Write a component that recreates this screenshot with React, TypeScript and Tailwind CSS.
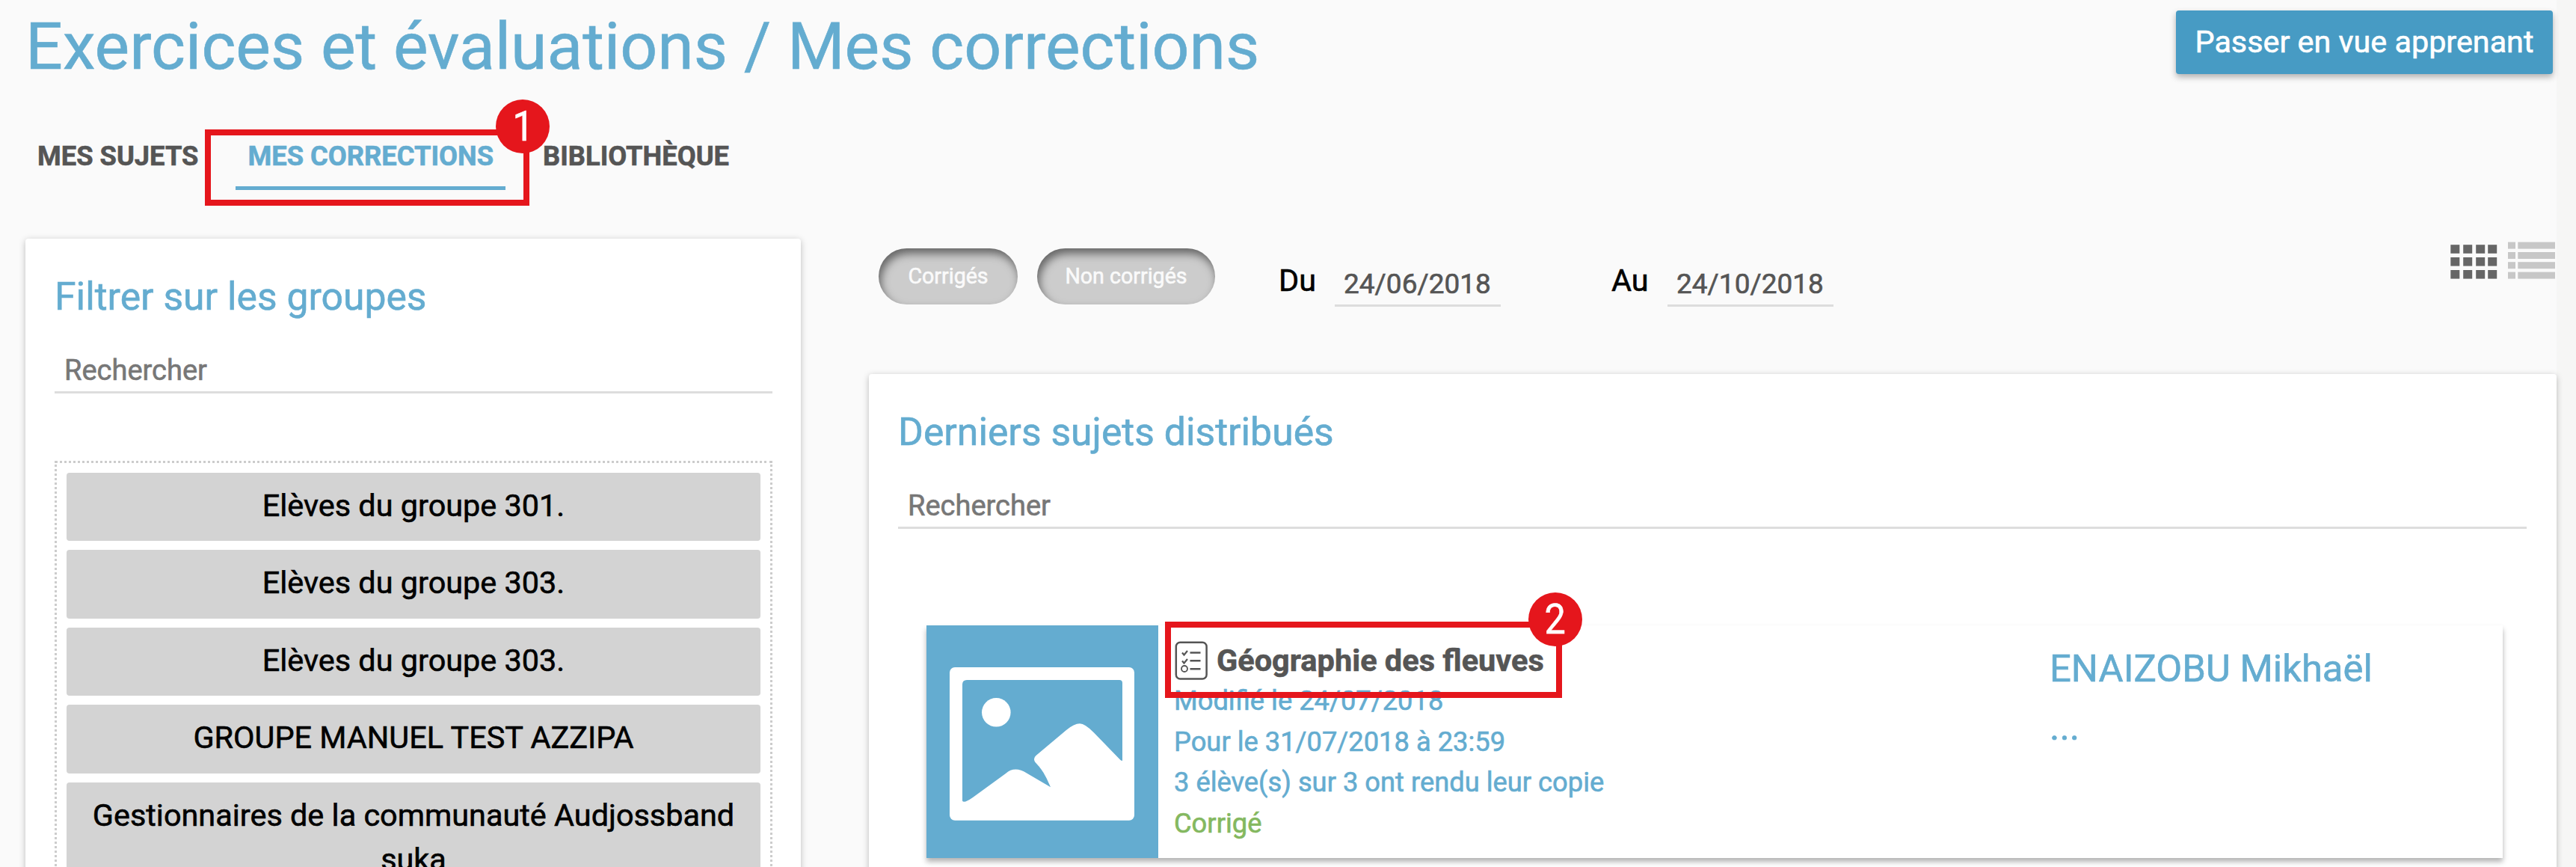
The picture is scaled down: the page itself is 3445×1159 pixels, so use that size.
import type { ReactNode } from "react";

const groups = [
  "Elèves du groupe 301.",
  "Elèves du groupe 303.",
  "Elèves du groupe 303.",
  "GROUPE MANUEL TEST AZZIPA",
  "Gestionnaires de la communauté Audjossband suka",
];

function Tab({ label, active = false, children }: { label: string; active?: boolean; children?: ReactNode }) {
  return (
    <div
      className={
        active
          ? "relative h-[66px] border-b-5 border-[#64acd0] px-4 text-[#64acd0]"
          : "relative h-[66px] px-4 text-[#555]"
      }
    >
      <span className="block text-[36.3px] leading-[41px] font-bold whitespace-nowrap">{label}</span>
      {children}
    </div>
  );
}

function Step({ n, className }: { n: number; className: string }) {
  return (
    <span
      className={`absolute flex size-18 items-center justify-center rounded-full bg-[#e5161c] text-[56px] leading-none font-normal text-white ${className}`}
    >
      <span className="scale-x-90">{n}</span>
    </span>
  );
}

function Pill({ label, className }: { label: string; className: string }) {
  return (
    <button
      className={`h-[75px] rounded-full bg-[#ccc] text-center text-[28.6px] text-[#fafafa] shadow-[inset_3px_7px_12px_rgba(0,0,0,0.5)] ${className}`}
    >
      {label}
    </button>
  );
}

function DateField({ value }: { value: string }) {
  return (
    <div className="mt-[105px] h-[51px] w-[222px] border-b-3 border-[#ddd] pl-3 text-[37px] leading-[41px] text-[#555]">
      {value}
    </div>
  );
}

function CardHead({ title }: { title: string }) {
  return (
    <>
      <h2 className="text-[51.7px] leading-[60px] text-[#64acd0]">{title}</h2>
      <div className="mt-12 h-[51px] border-b-3 border-[#ddd] pl-[13px] text-[38px] leading-[41px] text-[#777]">
        Rechercher
      </div>
    </>
  );
}

function ViewIcons() {
  return (
    <svg className="mt-[69px] mr-0.5 ml-auto h-[50px] w-[140px]" viewBox="0 0 140 50">
      {[4.2, 21, 38].map((y) =>
        [0.3, 17.2, 34.2, 50.2].map((x) => <rect key={`${x}-${y}`} x={x} y={y} width="12" height="11.6" fill="#666" />)
      )}
      {[0.6, 14, 27.2, 40.6].map((y) => (
        <g key={y} fill="#c7c7c7">
          <rect x="77" y={y} width="10" height="9" />
          <rect x="90.3" y={y} width="49.7" height="9" />
        </g>
      ))}
    </svg>
  );
}

function Thumbnail() {
  return (
    <svg className="h-[311px] w-[310px] shrink-0 bg-[#64acd0]" viewBox="0 0 310 311">
      <rect x="31" y="56" width="247" height="204.7" rx="7" fill="#fff" />
      <path
        fill="#64acd0"
        d="M48 79Q48 73 54 73H258Q262 73 262 77V181Q260 181 257 177.500L224 143.500Q212 131.300 205 131.300Q197.500 131.300 187 140L146.500 174Q142 178 145.500 183C153 191 158 197 166 216.300L134 197.500Q118 187.500 106 198L62 230Q50 238.500 48 234.500Z"
      />
      <circle cx="93.300" cy="116.300" r="19.300" fill="#fff" />
    </svg>
  );
}

function ChecklistIcon() {
  return (
    <svg
      className="mt-[21px] ml-px h-[52px] w-11 shrink-0"
      viewBox="0 0 44 52"
      fill="none"
      stroke="#555"
      strokeWidth="2.500"
    >
      <rect x="1.800" y="1.800" width="40.800" height="48.800" rx="5.500" />
      <path d="M10 15.500L12.500 18.500L17 13M10 26.500L12.500 29.500L17 24" strokeWidth="2.200" />
      <circle cx="13" cy="37" r="4" strokeWidth="1.800" />
      <path d="M20.500 15.500H34.500M20.500 26.300H34.500M20.500 37.300H34.500" />
    </svg>
  );
}

export default function App() {
  return (
    <div className="flex h-[1159px] w-[3445px] overflow-hidden bg-[#f6f6f5] font-['Roboto',sans-serif] [-webkit-text-stroke:0.6px_currentColor]">
      <div className="h-full w-[3419px] bg-[#fafafa]">
        <header className="flex h-[188px] items-start justify-between pr-[5px] pl-[34px]">
          <h1 className="mt-3 text-[87.8px] leading-[100px] whitespace-nowrap text-[#64acd0]">
            Exercices et évaluations / Mes corrections
          </h1>
          <button className="mt-3.5 h-[85px] w-[504px] rounded-sm bg-[#479bc4] text-[41.3px] leading-[85px] text-white shadow-[0_4px_8px_rgba(0,0,0,0.3)]">
            Passer en vue apprenant
          </button>
        </header>

        <nav className="flex h-[66px] gap-[34px] pl-[34px]">
          <Tab label="MES SUJETS" />
          <Tab label="MES CORRECTIONS" active>
            <span className="absolute -top-[15px] -left-[41px] z-10 h-[102px] w-[434px] border-8 border-[#e5161c]" />
            <Step n={1} className="-top-[55px] left-[348px] z-10" />
          </Tab>
          <Tab label="BIBLIOTHÈQUE" />
        </nav>

        <main className="flex items-start pl-[34px]">
          <section className="mt-[65px] h-[900px] w-[1037px] shrink-0 rounded-sm bg-white pt-12 pr-[38px] pl-[39px] shadow-[0_2px_8px_rgba(0,0,0,0.25)]">
            <CardHead title="Filtrer sur les groupes" />
            <div className="mt-[90px] flex flex-col gap-3 border-3 border-dotted border-[#ccc] p-[13px]">
              {groups.map((g, i) => (
                <div
                  key={i}
                  className="rounded-sm bg-[#d3d3d3] px-6 pt-[15px] pb-[17px] text-center text-[41.4px] leading-[59.4px] text-black"
                >
                  {g}
                </div>
              ))}
            </div>
          </section>

          <div className="ml-[91px] w-[2257px]">
            <div className="flex h-[246px] items-start">
              <Pill label="Corrigés" className="mt-[78px] ml-[13px] w-[186px]" />
              <Pill label="Non corrigés" className="mt-[78px] ml-[26px] w-[238px]" />
              <span className="mt-24 ml-[85px] w-[75px] text-[41.4px] leading-[50px]">Du</span>
              <DateField value="24/06/2018" />
              <span className="mt-24 ml-[148px] w-[75px] text-[41.4px] leading-[50px]">Au</span>
              <DateField value="24/10/2018" />
              <ViewIcons />
            </div>

            <section className="h-[700px] rounded-sm bg-white pt-12 pr-10 pl-[39px] shadow-[0_2px_8px_rgba(0,0,0,0.25)]">
              <CardHead title="Derniers sujets distribués" />
              <article className="relative mt-[129px] mr-8 ml-[38px] flex h-[311px] bg-white shadow-[0_5px_7px_rgba(0,0,0,0.3)]">
                <Thumbnail />
                <div className="ml-[21px] w-[1171px] text-[36.3px] leading-[54.5px] text-[#64acd0]">
                  <div className="flex h-[74px] items-start">
                    <ChecklistIcon />
                    <h3 className="mt-[22px] ml-3 text-[41.5px] leading-[50px] font-bold text-[#555]">
                      Géographie des fleuves
                    </h3>
                  </div>
                  <p>Modifié le 24/07/2018</p>
                  <p>Pour le 31/07/2018 à 23:59</p>
                  <p>3 élève(s) sur 3 ont rendu leur copie</p>
                  <p className="text-[#84b860]">Corrigé</p>
                </div>
                <div className="mt-7 text-[50.8px] leading-[60px] text-[#64acd0]">
                  <p>ENAIZOBU Mikhaël</p>
                  <p className="mt-[18px]">...</p>
                </div>
                <span className="absolute -top-[5px] left-[319px] h-[102px] w-[531px] border-8 border-[#e5161c]" />
                <Step n={2} className="-top-11 left-[805px]" />
              </article>
            </section>
          </div>
        </main>
      </div>
    </div>
  );
}
